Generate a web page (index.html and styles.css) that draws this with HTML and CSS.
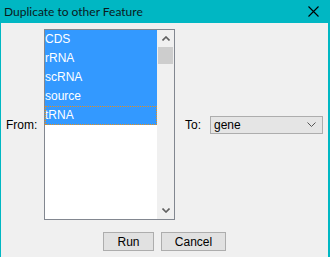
FILE: index.html
```html
<!DOCTYPE html>
<html lang="en">
<head>
    <meta charset="utf-8">
    <title>Duplicate to other Feature</title>
    <link rel="stylesheet" href="styles.css">
</head>
<body>
<div class="window">
    <div class="titlebar">
        <span class="title">Duplicate to other Feature</span>
        <div class="close">
            <svg width="11" height="11" viewBox="0 0 11 11"><path d="M0.5 0.5 L10.5 10.5 M10.5 0.5 L0.5 10.5" stroke="#000" stroke-width="1.1" fill="none"/></svg>
        </div>
    </div>

    <div class="content">
        <div class="row">
            <span class="lbl from">From:</span>
            <div class="listbox">
                <ul class="items">
                    <li class="sel">CDS</li>
                    <li class="sel">rRNA</li>
                    <li class="sel">scRNA</li>
                    <li class="sel">source</li>
                    <li class="sel focus">tRNA</li>
                </ul>
                <div class="scrollbar">
                    <div class="arrow">
                        <svg width="8" height="5" viewBox="0 0 8 5"><path d="M0.5 4.5 L4 1 L7.5 4.5" stroke="#606060" stroke-width="1.6" fill="none"/></svg>
                    </div>
                    <div class="thumb"></div>
                    <div class="track"></div>
                    <div class="arrow">
                        <svg width="8" height="5" viewBox="0 0 8 5"><path d="M0.5 0.5 L4 4 L7.5 0.5" stroke="#606060" stroke-width="1.6" fill="none"/></svg>
                    </div>
                </div>
            </div>
            <span class="lbl to">To:</span>
            <div class="combo">
                <span>gene</span>
                <svg width="9" height="5" viewBox="0 0 9 5"><path d="M0.5 0.5 L4.5 4.5 L8.5 0.5" stroke="#555" stroke-width="1" fill="none"/></svg>
            </div>
        </div>

        <div class="buttons">
            <button class="btn run">Run</button>
            <button class="btn cancel">Cancel</button>
        </div>
    </div>
</div>
</body>
</html>
```

FILE: styles.css
```css
body {
    margin: 0;
    font-family: "Liberation Sans", Arial, sans-serif;
    font-size: 12px;
    color: #000;
}
.window {
    width: 330px;
    height: 257px;
    box-sizing: border-box;
    background: #f0f0f0;
    border-left: 1px solid #00b7c3;
    border-right: 2px solid #00b7c3;
}
.titlebar {
    height: 23px;
    background: #00b7c3;
    display: flex;
    align-items: center;
}
.title {
    flex: 1;
    padding-left: 3px;
    font-family: Lato, sans-serif;
    font-size: 12px;
    color: #0a1a1c;
}
.close {
    width: 30px;
    display: flex;
    justify-content: center;
    align-items: center;
}
.close svg {
    display: block;
}

.content {
    padding-top: 6px;
}
.row {
    display: flex;
    align-items: center;
    padding-left: 5px;
}
.lbl.from {
    width: 38px;
}
.lbl.to {
    width: 25px;
    margin-left: 10px;
}
.listbox {
    width: 131px;
    height: 191px;
    box-sizing: border-box;
    border: 1px solid #828790;
    background: #fff;
    display: flex;
}
.items {
    flex: 1;
    list-style: none;
    margin: 0;
    padding: 0;
}
.items li {
    height: 19px;
    line-height: 19px;
    padding-left: 0;
}
.items li.sel {
    background: #3399ff;
    color: #fff;
}
.items li.focus {
    outline: 1px dotted #e8901a;
    outline-offset: -1px;
}
.scrollbar {
    width: 17px;
    background: #f0f0f0;
    display: flex;
    flex-direction: column;
}
.arrow {
    height: 17px;
    display: flex;
    justify-content: center;
    align-items: center;
}
.arrow svg {
    display: block;
}
.thumb {
    height: 17px;
    margin: 0 1px;
    background: #cdcdcd;
}
.track {
    flex: 1;
}
.combo {
    width: 113px;
    height: 18px;
    box-sizing: border-box;
    border: 1px solid #adadad;
    background: #e5e5e5;
    display: flex;
    align-items: center;
    justify-content: space-between;
    padding: 0 6px 0 3px;
}
.combo svg {
    display: block;
}

.buttons {
    display: flex;
    justify-content: center;
    gap: 7px;
    margin-top: 12px;
}
.btn {
    height: 19px;
    box-sizing: border-box;
    border: 1px solid #adadad;
    background: #e1e1e1;
    font-family: "Liberation Sans", Arial, sans-serif;
    font-size: 12px;
    color: #000;
    padding: 0;
}
.btn.run {
    width: 51px;
}
.btn.cancel {
    width: 65px;
}
```
